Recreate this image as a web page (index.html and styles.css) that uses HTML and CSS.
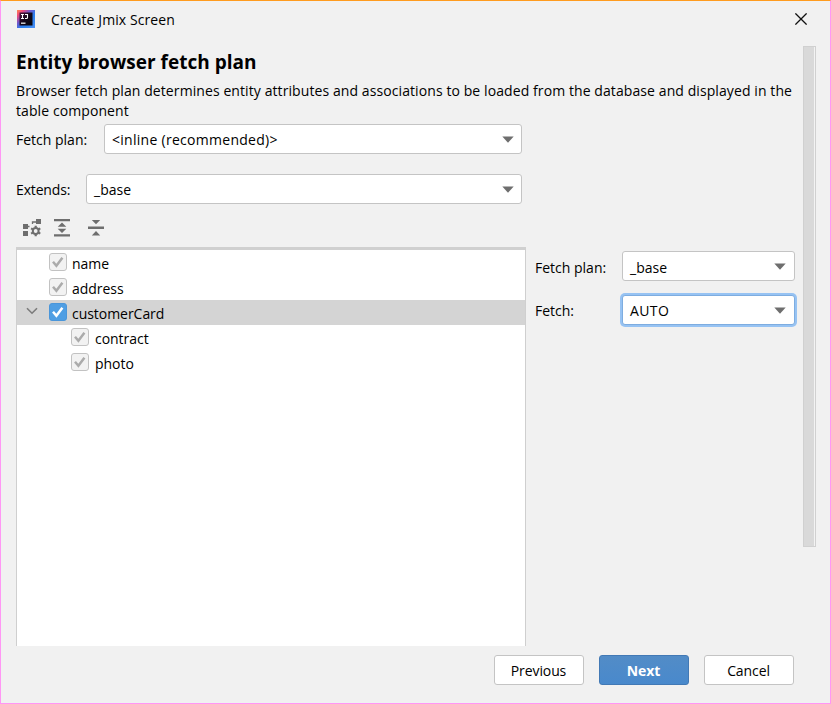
FILE: index.html
```html
<!DOCTYPE html>
<html lang="en">
<head>
<meta charset="utf-8">
<title>Create Jmix Screen</title>
<link rel="stylesheet" href="styles.css">
</head>
<body>
<svg class="defs" width="0" height="0">
  <symbol id="check" viewBox="0 0 18 18"><path d="M4 8.7l3.4 4L13.4 4.8" fill="none" stroke="currentColor" stroke-width="2.5"/></symbol>
  <symbol id="arrow" viewBox="0 0 12 7"><path d="M.3.5h11.4L6 6.7z" fill="#6e6e6e"/></symbol>
</svg>
<div class="dialog">
  <header class="titlebar">
    <svg class="logo" width="18" height="18" viewBox="0 0 18 18">
      <defs>
        <linearGradient id="lg" x1="0" y1="0" x2="1" y2="1"><stop offset="0" stop-color="#ff8a4c"/><stop offset=".18" stop-color="#f04a7b"/><stop offset=".4" stop-color="#6a5ad0"/><stop offset=".6" stop-color="#2a80ee"/><stop offset="1" stop-color="#4a90f5"/></linearGradient>
        <linearGradient id="core" x1="0" y1="0" x2="1" y2="1"><stop offset="0" stop-color="#4a1238"/><stop offset=".5" stop-color="#140818"/><stop offset="1" stop-color="#05050c"/></linearGradient>
      </defs>
      <path d="M0 0h18v18H0z" fill="url(#lg)"/>
      <path d="M2.5 2.5h13v13h-13z" fill="url(#core)"/>
      <path d="M4 4.5h3M5.5 4.5v4M4 8.5h3M8 4.5h2.5v3q0 1-1 1H8" fill="none" stroke="#fff" stroke-width="1.1"/><path d="M4 13.2h4.5" stroke="#ddd" stroke-width="1.4"/>
    </svg>
    <span class="title">Create Jmix Screen</span>
    <svg class="close" width="12" height="12" viewBox="0 0 12 12"><path d="M.4.4l11.2 11.2M11.6.4L.4 11.6" stroke="#111" stroke-width="1.3"/></svg>
  </header>
  <div class="body">
    <main class="content">
      <h1>Entity browser fetch plan</h1>
      <p class="desc">Browser fetch plan determines entity attributes and associations to be loaded from the database and displayed in the<br>table component</p>
      <div class="field plan"><label>Fetch plan:</label><div class="combo"><span>&lt;inline (recommended)&gt;</span><svg width="12" height="7"><use href="#arrow"/></svg></div></div>
      <div class="field ext"><label>Extends:</label><div class="combo"><span>_base</span><svg width="12" height="7"><use href="#arrow"/></svg></div></div>
      <div class="toolbar">
        <svg width="19" height="18" viewBox="0 0 19 18" fill="#6e6e6e"><path d="M0 5h5v5H0zM0 12h5v5H0zM13 0h5v5h-5z"/><path d="M5 7.5h1.5M9.5 5V3H13" stroke="#6e6e6e" stroke-width="1.3" fill="none"/><circle cx="12.7" cy="12" r="2.9" fill="none" stroke="#6e6e6e" stroke-width="2"/><path d="M12.7 6.7v2M12.7 15.3v2M8.1 9.4l1.8 1M15.5 13.6l1.8 1M8.1 14.6l1.8-1M15.5 10.4l1.8-1" stroke="#6e6e6e" stroke-width="2.2"/></svg>
        <svg width="16" height="18" viewBox="0 0 16 18" fill="#6e6e6e"><path d="M0 0h16v2.3H0zM0 15.2h16v2.3H0zM8 3.5l4.3 4.2H3.7zM8 14l4.3-4.2H3.7z"/></svg>
        <svg width="16" height="18" viewBox="0 0 16 18" fill="#6e6e6e"><path d="M0 7.6h16V10H0zM3.8 1h8.4L8 5.3zM3.8 16.5h8.4L8 12.1z"/></svg>
      </div>
      <div class="split">
        <ul class="tree">
          <li><i class="box"><svg width="18" height="18"><use href="#check"/></svg></i><span>name</span></li>
          <li><i class="box"><svg width="18" height="18"><use href="#check"/></svg></i><span>address</span></li>
          <li class="selected"><svg class="chevron" width="12" height="8" viewBox="0 0 12 8"><path d="M1 1.2l5 5 5-5" fill="none" stroke="#7b7b7b" stroke-width="1.6"/></svg><i class="box on"><svg width="18" height="18"><use href="#check"/></svg></i><span>customerCard</span></li>
          <li class="child"><i class="box"><svg width="18" height="18"><use href="#check"/></svg></i><span>contract</span></li>
          <li class="child"><i class="box"><svg width="18" height="18"><use href="#check"/></svg></i><span>photo</span></li>
        </ul>
        <div class="props">
          <label>Fetch plan:</label><div class="combo"><span>_base</span><svg width="12" height="7"><use href="#arrow"/></svg></div>
          <label>Fetch:</label><div class="combo focused"><span>AUTO</span><svg width="12" height="7"><use href="#arrow"/></svg></div>
        </div>
      </div>
    </main>
    <div class="scrollbar"></div>
  </div>
  <footer>
    <button>Previous</button><button class="primary">Next</button><button>Cancel</button>
  </footer>
</div>
</body>
</html>
```
FILE: styles.css
```css
* { box-sizing: border-box; }
body { margin: 0; font: 14px/20px "Open Sans", "Noto Sans", sans-serif; letter-spacing: 0; color: #000; }
svg { display: block; flex: none; }
.defs { position: absolute; }
.dialog { width: 831px; height: 704px; background: #f1f1f1; border: 1px solid #ff96f5; border-top-color: #ff9b1e; display: flex; flex-direction: column; overflow: hidden; white-space: nowrap; }
.titlebar { height: 37px; flex: none; display: flex; align-items: center; padding: 0 23px 0 16px; }
.logo { margin-bottom: 1px; }
.title { flex: 1; margin-left: 16px; letter-spacing: .09px; }
.close { margin-bottom: 2px; }
.body { display: flex; height: 608px; flex: none; }
.content { width: 802px; padding-left: 15px; flex: none; }
h1 { margin: 12px 0 7px; font-size: 19px; line-height: 24px; letter-spacing: .03px; }
.desc { margin: 0; letter-spacing: .088px; }
.field { display: flex; align-items: center; width: 506px; height: 30px; }
.field label { padding-top: 1px; }
.plan { margin-top: 3px; }
.plan label { width: 88px; }
.ext { margin-top: 20px; }
.ext label { width: 70px; letter-spacing: -.15px; }
.combo { flex: 1; height: 30px; display: flex; align-items: center; justify-content: space-between; padding: 0 7px; background: #fff; border: 1px solid #c4c4c4; border-radius: 3px; }
.combo span { padding-top: 1px; }
.plan .combo span { padding-top: 2px; letter-spacing: .28px; }
.toolbar { display: flex; margin-top: 15px; padding-left: 7px; height: 18px; }
.toolbar svg + svg { margin-left: 12px; }
.toolbar svg:last-child { margin-left: 18px; }
.split { display: flex; margin-top: 10px; }
.tree { flex: none; width: 510px; height: 399px; margin: 0; padding: 0; list-style: none; background: #fff; border: 1px solid #cfcfcf; border-top: 3px solid #d0d0d0; border-bottom: 0; }
.tree li { display: flex; height: 25px; padding: 2px 0 0 32px; }
.tree li.child { padding-left: 54px; }
.tree li.child span { margin-left: 6px; }
.tree li.selected { background: #d4d4d4; padding-left: 9px; }
.tree span { margin: 2px 0 0 5px; letter-spacing: -.04px; }
.chevron { margin: 5px 11px 0 0; }
.box { width: 18px; height: 18px; border: 1px solid #c2c2c2; border-radius: 3px; background: #f2f2f2; color: #ababab; margin-top: 1px; }
.box svg { margin: -1px; }
.box.on { background: #4f9ee3; border-color: #4a96da; color: #fff; }
.props { display: grid; grid-template-columns: 87px 173px; grid-auto-rows: 30px; row-gap: 14px; align-items: center; align-content: start; padding: 4px 0 0 9px; }
.props .combo { padding-right: 8px; }
.props .combo:not(.focused) span { padding-top: 3px; }
.props label:first-child { padding-top: 3px; }
.props label { padding-top: 1px; }
.focused { border-color: #7eade0; box-shadow: 0 0 0 2px #97c3f3; }
.focused span { letter-spacing: .4px; }
.scrollbar { width: 13px; height: 501px; margin-top: 8px; background: #d9d9d9; border: 1px solid #d0d0d0; box-shadow: inset -1px 0 #f3f3f3; }
footer { display: flex; justify-content: flex-end; gap: 15px; padding: 9px 36.5px 0 0; }
button { width: 90px; height: 30px; padding: 1px 0 0; font: inherit; letter-spacing: -.1px; color: #000; background: #fff; border: 1px solid #c4c4c4; border-radius: 3px; }
.primary { color: #fff; font-weight: 700; background: linear-gradient(#528cc7, #4989cc); border-color: #4279b5; }
```
